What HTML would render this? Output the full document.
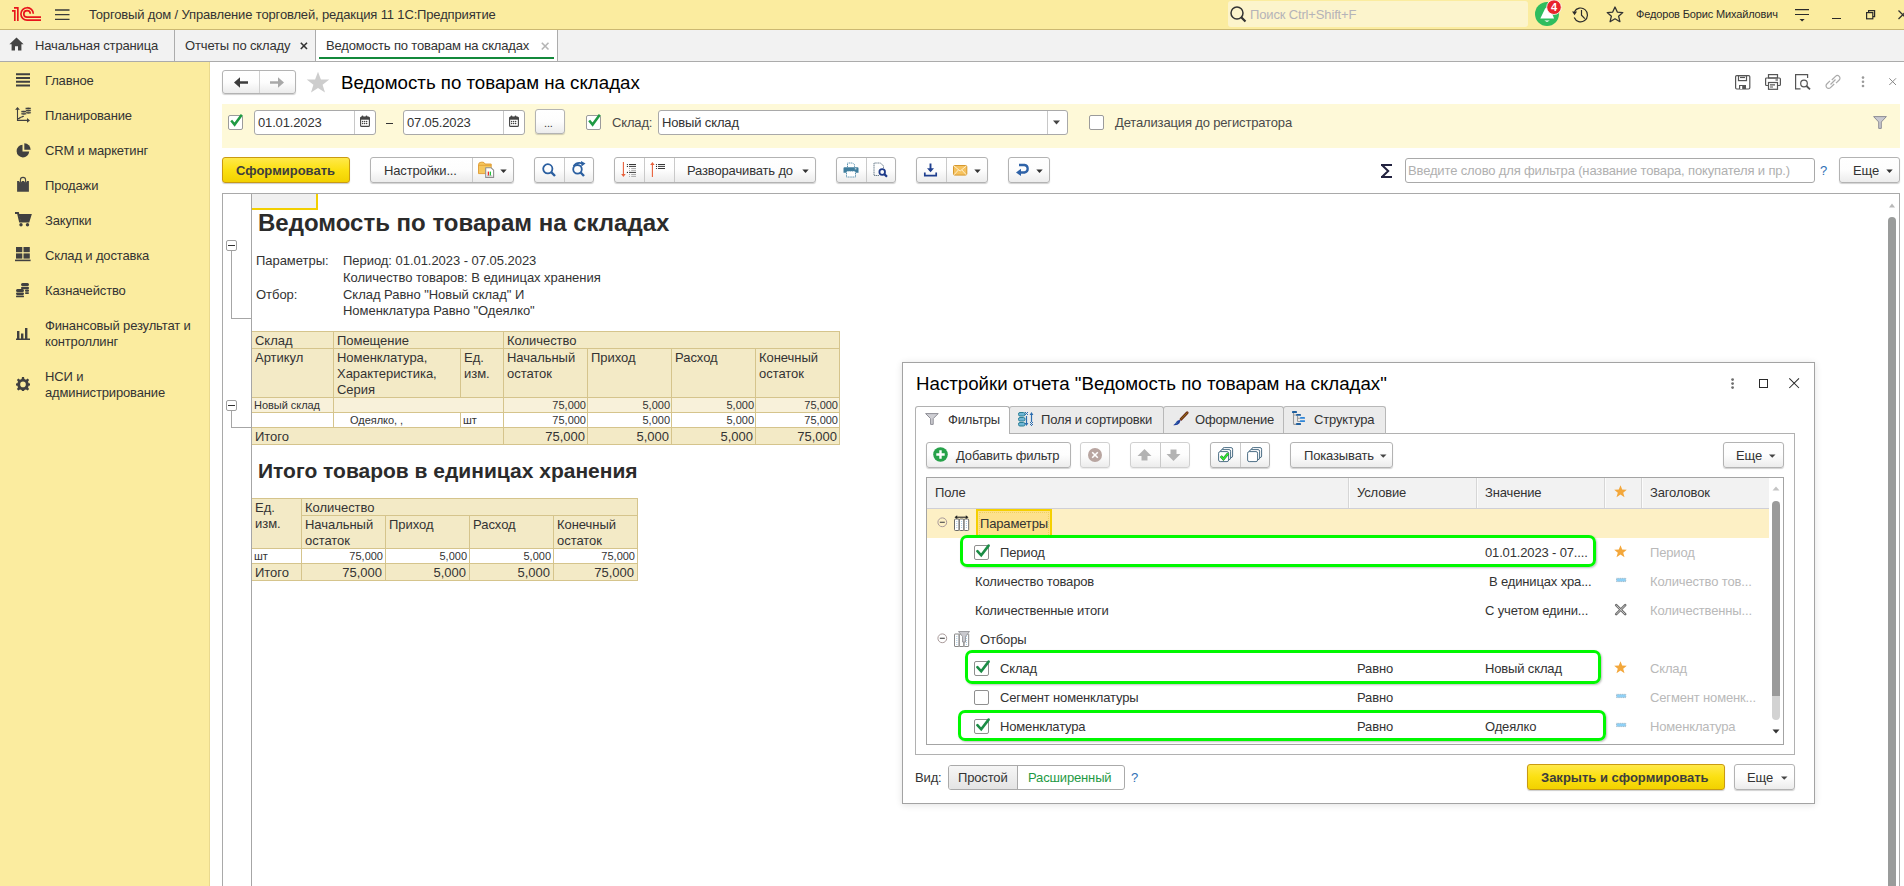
<!DOCTYPE html>
<html><head><meta charset="utf-8">
<style>
*{margin:0;padding:0;box-sizing:border-box}
html,body{width:1904px;height:886px;overflow:hidden;background:#fff;font-family:"Liberation Sans",sans-serif;font-size:13px;color:#333}
.a{position:absolute}
.t{position:absolute;white-space:nowrap;line-height:16px;letter-spacing:-0.15px}
svg{position:absolute;overflow:visible}
.btn{position:absolute;border:1px solid #b3b3b3;border-radius:3px;background:linear-gradient(#fff 0%,#fdfdfd 50%,#ececec 100%);box-shadow:0 1px 1px rgba(0,0,0,.18)}
.dv{position:absolute;top:0;bottom:0;width:1px;background:#c9c9c9}
.ybtn{position:absolute;border:1px solid #c99a12;border-radius:3px;background:linear-gradient(#ffe94a 0%,#fbe012 50%,#f2d100 100%);box-shadow:0 1px 1px rgba(0,0,0,.2);font-weight:bold;color:#333}
.inp{position:absolute;border:1px solid #a9a9a9;border-radius:3px;background:#fff}
.cb{position:absolute;width:15px;height:15px;border:1px solid #9b9b9b;border-radius:2px;background:#fff}
.hl{position:absolute;height:1px}
.vl{position:absolute;width:1px}
</style></head><body>

<!-- TOP BAR -->
<div class="a" style="left:0;top:0;width:1904px;height:29px;background:#fbec9f"></div>
<div class="a" style="left:0;top:29px;width:1904px;height:1px;background:#cbb872"></div>

<!-- TAB BAR -->
<div class="a" style="left:0;top:30px;width:1904px;height:31px;background:#f2f2f2"></div>
<div class="a" style="left:0;top:61px;width:1904px;height:1px;background:#ababab"></div>

<!-- TOPCONTENT -->
<!-- logo 1C -->
<svg style="left:0;top:0" width="45" height="26">
 <g fill="none" stroke="#e8141c" stroke-width="1.65" stroke-linejoin="miter">
  <path d="M12 10.9 H14.8 V21"/>
  <path d="M14 7.8 H17.85 V21"/>
  <path d="M33.3 13.8 A6.2 6.2 0 1 0 27.1 20.1 H41"/>
  <path d="M30.3 13.8 A3.25 3.25 0 1 0 27.1 17.1 H41"/>
 </g>
</svg>
<!-- hamburger -->
<svg style="left:55px;top:9px" width="15" height="12"><g stroke="#3a3a3a" stroke-width="1.3"><path d="M0 1H14.5M0 5.7H14.5M0 10.4H14.5"/></g></svg>
<div class="t" style="left:89px;top:7px;color:#333">Торговый дом / Управление торговлей, редакция 11 1С:Предприятие</div>
<!-- search -->
<div class="a" style="left:1228px;top:1px;width:300px;height:26px;background:#fcf4cc;border-radius:3px"></div>
<svg style="left:1230px;top:6px" width="17" height="17"><circle cx="7" cy="7" r="6" fill="none" stroke="#333" stroke-width="1.5"/><path d="M11.2 11.2 L15.5 15.5" stroke="#333" stroke-width="2.2"/></svg>
<div class="t" style="left:1250px;top:7px;color:#b5b3b8">Поиск Ctrl+Shift+F</div>
<!-- bell -->
<svg style="left:1530px;top:0" width="34" height="28">
 <circle cx="17" cy="13.9" r="12" fill="#2fbd5e"/>
 <path d="M10.3 18.6 L14.2 10.5 Q15.5 7 17.5 7 Q19.5 7 20.8 10.5 L24.1 18.6 Z" fill="#fff"/>
 <path d="M14.3 20.4 H19.8 L17 22 Z" fill="#fff"/>
 <circle cx="24" cy="7.2" r="7.3" fill="#e8232a" stroke="#fff" stroke-width="0.8"/>
 <text x="24" y="11" font-family="Liberation Sans" font-weight="bold" font-size="11" fill="#fff" text-anchor="middle">4</text>
</svg>
<!-- history -->
<svg style="left:1572px;top:6px" width="18" height="17"><g fill="none" stroke="#2a2a2a" stroke-width="1.2"><path d="M2.4 5.8 A6.9 6.9 0 1 1 2.2 11.6"/><path d="M9.5 4 V9.2 L12.8 12.6"/></g><path d="M0 5.5 L5 5.5 L2.6 9.2 Z" fill="#2a2a2a"/></svg>
<!-- star outline -->
<svg style="left:1606px;top:6px" width="18" height="17" viewBox="0 0 18 17"><path d="M9 1 L11.3 6.1 L16.8 6.6 L12.6 10.2 L13.9 15.7 L9 12.8 L4.1 15.7 L5.4 10.2 L1.2 6.6 L6.7 6.1 Z" fill="none" stroke="#333" stroke-width="1.3" stroke-linejoin="round"/></svg>
<div class="t" style="left:1636px;top:6px;font-size:11px;color:#2a2a2a">Федоров Борис Михайлович</div>
<!-- filter/menu icon -->
<svg style="left:1795px;top:8px" width="15" height="15"><g stroke="#2a2a2a" stroke-width="1.2"><path d="M0 1.6H14M0 6.5H14"/></g><path d="M4.5 11 H9.7 L7.1 13.6Z" fill="#2a2a2a"/></svg>
<!-- minimize -->
<div class="a" style="left:1832px;top:18px;width:9px;height:1.2px;background:#2a2a2a"></div>
<!-- restore -->
<svg style="left:1866px;top:10px" width="10" height="10"><rect x="0.6" y="2.6" width="6.2" height="6.2" fill="none" stroke="#2a2a2a" stroke-width="1.2"/><path d="M2.6 2.4 V0.6 H8.6 V6.6 H7" fill="none" stroke="#2a2a2a" stroke-width="1.2"/></svg>
<!-- close -->
<svg style="left:1898px;top:10px" width="10" height="10"><path d="M0.5 0.5 L9 9 M9 0.5 L0.5 9" stroke="#333" stroke-width="1.3"/></svg>

<!-- TABS -->
<svg style="left:9px;top:37px" width="15" height="14" viewBox="0 0 15 14"><path d="M7.5 0.5 L14.6 7.2 H12.4 V13.5 H9 V9.3 H6 V13.5 H2.6 V7.2 H0.4 Z" fill="#444"/></svg>
<div class="t" style="left:35px;top:38px;color:#333">Начальная страница</div>
<div class="a" style="left:174px;top:30px;width:1px;height:31px;background:#acacac"></div>
<div class="t" style="left:185px;top:38px;color:#333">Отчеты по складу</div>
<svg style="left:300px;top:42px" width="8" height="8"><path d="M0.8 0.8 L7 7 M7 0.8 L0.8 7" stroke="#333" stroke-width="1.6"/></svg>
<div class="a" style="left:315px;top:30px;width:1px;height:31px;background:#acacac"></div>
<div class="a" style="left:316px;top:30px;width:241px;height:31px;background:#fff"></div>
<div class="t" style="left:326px;top:38px;color:#333">Ведомость по товарам на складах</div>
<svg style="left:541px;top:42px" width="9" height="9"><path d="M0.8 0.8 L7.5 7.5 M7.5 0.8 L0.8 7.5" stroke="#b5b5b5" stroke-width="1.6"/></svg>
<div class="a" style="left:319px;top:57px;width:235px;height:2px;background:#13893b"></div>
<div class="a" style="left:557px;top:30px;width:1px;height:31px;background:#acacac"></div>

<!-- SIDEBAR -->
<div class="a" style="left:0;top:62px;width:210px;height:824px;background:#fbec9f"></div>

<div class="a" style="left:209px;top:62px;width:1px;height:824px;background:#e9d98f"></div>
<!-- Главное -->
<svg style="left:16px;top:73px" width="15" height="14"><g stroke="#404040" stroke-width="2"><path d="M0 1.2H14M0 5H14M0 8.8H14M0 12.6H14"/></g></svg>
<div class="t" style="left:45px;top:73px">Главное</div>
<!-- Планирование -->
<svg style="left:12px;top:104px" width="24" height="22" viewBox="0 0 24 22"><g fill="none" stroke="#404040" stroke-width="1.1"><path d="M5.5 4.5 V16.4 H16"/><path d="M5.8 14.6 H7 L7.6 13.8 H8.6 L9.2 13 H10.2 L10.8 12.4 H11.8"/></g><path d="M3.1 5.7 L5.5 2.9 L7.9 5.7Z M15 14.1 L18 16.4 L15 18.8Z" fill="#404040"/><g fill="#404040" stroke="#fbec9f" stroke-width="0.5"><ellipse cx="16.2" cy="8.7" rx="3" ry="1.2"/><ellipse cx="16.2" cy="6.6" rx="3" ry="1.2"/><ellipse cx="16.2" cy="4.5" rx="3" ry="1.2"/><ellipse cx="11.8" cy="9.8" rx="2.9" ry="1.2"/><ellipse cx="11.8" cy="7.6" rx="2.9" ry="1.2"/></g></svg>
<div class="t" style="left:45px;top:108px">Планирование</div>
<!-- CRM -->
<svg style="left:16px;top:143px" width="15" height="15" viewBox="0 0 15 15"><path d="M6.5 1.8 A6.3 6.3 0 1 0 13.2 8.5 H6.5 Z" fill="#404040"/><path d="M8.3 0.3 A6.3 6.3 0 0 1 14.7 6.7 H8.3 Z" fill="#404040"/></svg>
<div class="t" style="left:45px;top:143px">CRM и маркетинг</div>
<!-- Продажи -->
<svg style="left:12px;top:174px" width="24" height="22" viewBox="0 0 24 22"><path d="M5.1 7.1 H7 L8.4 9.3 L10 7.1 H12 L13.6 9.3 L15 7.1 H16.9 V17.7 H5.1 Z" fill="#454545"/><path d="M8.4 9 V6 A2.6 2.6 0 0 1 13.6 6 V9" fill="none" stroke="#454545" stroke-width="1.1"/></svg>
<div class="t" style="left:45px;top:178px">Продажи</div>
<!-- Закупки -->
<svg style="left:15px;top:212px" width="16" height="15" viewBox="0 0 16 15"><path d="M0 1 H3 L5 9.5 H13.5 L15.5 3 H4" fill="none" stroke="#404040" stroke-width="2"/><path d="M4.3 3 H15.5 L13.5 9.5 H5.5 Z" fill="#404040"/><circle cx="6" cy="12.8" r="1.7" fill="#404040"/><circle cx="12.5" cy="12.8" r="1.7" fill="#404040"/></svg>
<div class="t" style="left:45px;top:213px">Закупки</div>
<!-- Склад и доставка -->
<svg style="left:15px;top:247px" width="16" height="15" viewBox="0 0 16 15"><g fill="#404040"><rect x="1" y="0" width="6.3" height="5.2"/><rect x="8.5" y="0" width="6.3" height="5.2"/><rect x="1" y="6.4" width="6.3" height="5.2"/><rect x="8.5" y="6.4" width="6.3" height="5.2"/><rect x="0" y="12.6" width="15.6" height="1.6"/></g></svg>
<div class="t" style="left:45px;top:248px">Склад и доставка</div>
<!-- Казначейство -->
<svg style="left:12px;top:278px" width="24" height="22" viewBox="0 0 24 22"><g fill="#404040"><rect x="9" y="5" width="8" height="3" rx="1.5"/><rect x="9" y="8.7" width="8" height="2.5" rx="1.2"/><rect x="13" y="11.6" width="4" height="2.2" rx="1"/><rect x="13" y="14.2" width="4" height="1.8" rx="0.9"/><rect x="4" y="11" width="8" height="3" rx="1.5"/><rect x="4" y="14.6" width="8" height="2.3" rx="1.1"/><rect x="4" y="17.5" width="8" height="1.8" rx="0.9"/></g></svg>
<div class="t" style="left:45px;top:283px">Казначейство</div>
<!-- Финансовый -->
<svg style="left:16px;top:327px" width="14" height="13" viewBox="0 0 14 13"><g fill="#404040"><rect x="1" y="4" width="2.4" height="8"/><rect x="5" y="6.5" width="2.4" height="5.5"/><rect x="9" y="1" width="2.4" height="11"/><rect x="0" y="11.5" width="14" height="1.5"/></g></svg>
<div class="t" style="left:45px;top:318px;line-height:16px">Финансовый результат и<br>контроллинг</div>
<!-- НСИ -->
<svg style="left:16px;top:377px" width="14" height="14" viewBox="0 0 14 14"><path fill="#404040" fill-rule="evenodd" d="M6 0 H8 L8.4 2 L10 2.7 L11.7 1.5 L13.1 2.9 L12 4.6 L12.6 6.2 L14 6.5 V8.5 L12.6 8.8 L12 10.4 L13.1 12.1 L11.7 13.5 L10 12.4 L8.4 13 L8 14 H6 L5.6 13 L4 12.4 L2.3 13.5 L0.9 12.1 L2 10.4 L1.4 8.8 L0 8.5 V6.5 L1.4 6.2 L2 4.6 L0.9 2.9 L2.3 1.5 L4 2.7 L5.6 2 Z M7 4.6 A2.8 2.8 0 1 0 7 10.2 A2.8 2.8 0 1 0 7 4.6Z"/></svg>
<div class="t" style="left:45px;top:369px;line-height:16px">НСИ и<br>администрирование</div>

<!-- CONTENT -->
<!-- nav buttons -->
<div class="btn" style="left:222px;top:70px;width:74px;height:24px"><div class="dv" style="left:36px;background:#d0d0d0"></div></div>
<svg style="left:230px;top:75px" width="60" height="15"><path d="M9.5 7.5 H18" stroke="#3c3c3c" stroke-width="2.5"/><path d="M4 7.5 L10 2.3 V12.7 Z" fill="#3c3c3c"/><path d="M40 7.5 H48.5" stroke="#a8a8a8" stroke-width="2.5"/><path d="M54 7.5 L48 2.3 V12.7 Z" fill="#a8a8a8"/></svg>
<!-- star -->
<svg style="left:306px;top:71px" width="24" height="22" viewBox="0 0 24 22"><path d="M12 0.8 L14.9 8.4 L23.3 8.6 L16.6 13.7 L19 21.6 L12 17 L5 21.6 L7.4 13.7 L0.7 8.6 L9.1 8.4 Z" fill="#cdcdcd"/></svg>
<div class="t" style="left:341px;top:72px;font-size:18.7px;line-height:22px;color:#000;letter-spacing:0">Ведомость по товарам на складах</div>
<!-- right icons -->
<svg style="left:1735px;top:75px" width="16" height="15" viewBox="0 0 16 15"><g fill="none" stroke="#555" stroke-width="1.2"><rect x="0.6" y="0.6" width="14.2" height="13.4" rx="1.2"/><rect x="3.5" y="0.6" width="8" height="5"/><path d="M5 2.5 H10"/></g><rect x="4" y="10" width="7" height="4" fill="#555"/><rect x="5.2" y="11" width="2" height="3" fill="#fff"/></svg>
<svg style="left:1765px;top:74px" width="17" height="16" viewBox="0 0 17 16"><g fill="none" stroke="#555" stroke-width="1.2"><rect x="3.5" y="0.6" width="9" height="3.4"/><path d="M3.5 11.5 H1.6 A1 1 0 0 1 0.6 10.5 V5 A1 1 0 0 1 1.6 4 H14.4 A1 1 0 0 1 15.4 5 V10.5 A1 1 0 0 1 14.4 11.5 H12.5"/><rect x="3.5" y="8.5" width="9" height="6.8"/><path d="M5 10.8 H10 M5 13 H8"/><path d="M10.5 6 H13"/></g></svg>
<svg style="left:1795px;top:74px" width="17" height="16" viewBox="0 0 17 16"><g fill="none" stroke="#555" stroke-width="1.2"><path d="M5.5 14.8 H0.6 V0.6 H12.6 V4"/><circle cx="9" cy="9.5" r="3.3"/></g><path d="M11.5 12 L15 15.4" stroke="#555" stroke-width="1.8"/></svg>
<svg style="left:1825px;top:74px" width="16" height="16" viewBox="0 0 16 16"><g fill="none" stroke="#aaa" stroke-width="1.2"><path d="M6.8 6 L10.5 2.3 A2.6 2.6 0 0 1 14.2 6 L11 9.2"/><path d="M9.2 10 L5.5 13.7 A2.6 2.6 0 0 1 1.8 10 L5 6.8"/><path d="M5.5 10.5 L10.5 5.5"/></g></svg>
<svg style="left:1861px;top:76px" width="4" height="12"><circle cx="2" cy="1.6" r="1.3" fill="#9a9a9a"/><circle cx="2" cy="5.8" r="1.3" fill="#9a9a9a"/><circle cx="2" cy="10" r="1.3" fill="#9a9a9a"/></svg>
<svg style="left:1889px;top:78px" width="8" height="8"><path d="M0.3 0.3 L7 7 M7 0.3 L0.3 7" stroke="#888" stroke-width="1"/></svg>

<!-- FILTER PANEL -->
<div class="a" style="left:222px;top:104px;width:1678px;height:44px;background:#fef9d8"></div>
<div class="cb" style="left:228px;top:115px"></div>
<svg style="left:229px;top:113px" width="15" height="15"><path d="M2.2 7.5 L5.6 11.6 L12.8 1.8" fill="none" stroke="#1f9a43" stroke-width="2.5"/></svg>
<div class="inp" style="left:254px;top:110px;width:122px;height:25px"><div class="dv" style="left:99px;background:#c8c8c8"></div></div>
<div class="t" style="left:258px;top:115px;color:#333">01.01.2023</div>
<svg style="left:360px;top:115px" width="10" height="12" viewBox="0 0 10 12"><rect x="0.6" y="2.1" width="8.8" height="9.3" rx="1" fill="#fff" stroke="#444" stroke-width="1.1"/><rect x="0.6" y="2.1" width="8.8" height="2.6" fill="#444"/><circle cx="2.5" cy="1.4" r="0.9" fill="#444"/><circle cx="6.5" cy="1.4" r="0.9" fill="#444"/><g fill="#444"><circle cx="2.6" cy="6.6" r="0.75"/><circle cx="4.6" cy="6.6" r="0.75"/><circle cx="6.6" cy="6.6" r="0.75"/><circle cx="2.6" cy="8.5" r="0.75"/><circle cx="4.6" cy="8.5" r="0.75"/><circle cx="6.6" cy="8.5" r="0.75"/></g></svg>
<div class="a" style="left:386px;top:123px;width:7px;height:1px;background:#333"></div>
<div class="inp" style="left:403px;top:110px;width:122px;height:25px"><div class="dv" style="left:99px;background:#c8c8c8"></div></div>
<div class="t" style="left:407px;top:115px;color:#333">07.05.2023</div>
<svg style="left:509px;top:115px" width="10" height="12" viewBox="0 0 10 12"><rect x="0.6" y="2.1" width="8.8" height="9.3" rx="1" fill="#fff" stroke="#444" stroke-width="1.1"/><rect x="0.6" y="2.1" width="8.8" height="2.6" fill="#444"/><circle cx="2.5" cy="1.4" r="0.9" fill="#444"/><circle cx="6.5" cy="1.4" r="0.9" fill="#444"/><g fill="#444"><circle cx="2.6" cy="6.6" r="0.75"/><circle cx="4.6" cy="6.6" r="0.75"/><circle cx="6.6" cy="6.6" r="0.75"/><circle cx="2.6" cy="8.5" r="0.75"/><circle cx="4.6" cy="8.5" r="0.75"/><circle cx="6.6" cy="8.5" r="0.75"/></g></svg>
<div class="btn" style="left:535px;top:109px;width:30px;height:25px"></div>
<div class="t" style="left:544px;top:115px;font-size:11px">...</div>
<div class="cb" style="left:586px;top:115px"></div>
<svg style="left:587px;top:113px" width="15" height="15"><path d="M2.2 7.5 L5.6 11.6 L12.8 1.8" fill="none" stroke="#1f9a43" stroke-width="2.5"/></svg>
<div class="t" style="left:612px;top:115px;color:#4a4a4a">Склад:</div>
<div class="inp" style="left:658px;top:110px;width:410px;height:25px"><div class="dv" style="left:388px;background:#c8c8c8"></div></div>
<div class="t" style="left:662px;top:115px;color:#333">Новый склад</div>
<svg style="left:1053px;top:120px" width="8" height="5"><path d="M0 0.5 H7 L3.5 4.5Z" fill="#444"/></svg>
<div class="cb" style="left:1089px;top:115px"></div>
<div class="t" style="left:1115px;top:115px;color:#4a4a4a">Детализация до регистратора</div>
<svg style="left:1873px;top:116px" width="14" height="13" viewBox="0 0 14 13"><path d="M0.6 0.6 H13.4 L8.3 6 V12.4 H5.7 V6 Z" fill="#c9c9d0" stroke="#8e8e96" stroke-width="1"/></svg>

<!-- TOOLBAR -->
<div class="ybtn" style="left:222px;top:157px;width:128px;height:26px"></div>
<div class="t" style="left:236px;top:163px;font-weight:bold;color:#3d3d3d;letter-spacing:0">Сформировать</div>

<div class="btn" style="left:370px;top:157px;width:144px;height:26px"><div class="dv" style="left:101px"></div></div>
<div class="t" style="left:384px;top:163px">Настройки...</div>
<svg style="left:477px;top:161px" width="19" height="18" viewBox="0 0 19 18"><path d="M1.5 3.8 Q1.5 1.3 4 1.2 H6 Q7.2 1.3 8 3 H14.2 V12.6 H1.5 Z" fill="#f5c75e" stroke="#e09a30" stroke-width="0.9"/><path d="M1.5 4.3 H14.2" stroke="#e09a30" stroke-width="0.8"/><path d="M8.7 6.8 H14.2 L16.6 9.2 V16.4 H8.7 Z" fill="#fff" stroke="#8f8f8f" stroke-width="1.1" stroke-linejoin="round"/><rect x="10.7" y="10.6" width="1.3" height="4" fill="#ee2a2a"/><rect x="12.7" y="10.6" width="1.3" height="4" fill="#22c23a"/><path d="M10 14.8 H15.3" stroke="#9a9a9a" stroke-width="0.6"/></svg>
<svg style="left:500px;top:169px" width="8" height="5"><path d="M0.3 0.6 H6.7 L3.5 4Z" fill="#333"/></svg>

<div class="btn" style="left:534px;top:157px;width:60px;height:26px"><div class="dv" style="left:29px"></div></div>
<svg style="left:542px;top:163px" width="14" height="14"><circle cx="5.8" cy="5.8" r="4.6" fill="none" stroke="#2b5fa0" stroke-width="1.8"/><path d="M9.2 9.2 L13 13" stroke="#2b5fa0" stroke-width="2.4"/></svg>
<svg style="left:571px;top:161px" width="16" height="16"><circle cx="6.5" cy="8.3" r="4.3" fill="none" stroke="#2b5fa0" stroke-width="1.8"/><path d="M9.6 11.5 L13 15" stroke="#2b5fa0" stroke-width="2.4"/><path d="M2.5 5 Q6 0.5 11.5 2.5" fill="none" stroke="#2b5fa0" stroke-width="1.5"/><path d="M10 0 L14.5 2.5 L10.5 5.5Z" fill="#2b5fa0"/></svg>

<div class="btn" style="left:614px;top:157px;width:202px;height:26px"><div class="dv" style="left:29px"></div><div class="dv" style="left:59px"></div></div>
<svg style="left:612px;top:155px" width="60" height="25"><path d="M11.4 7 V20.5" stroke="#e8603a" stroke-width="1.1"/><path d="M9.2 19 H13.6 L11.4 22Z" fill="#e8603a"/><g fill="#222"><circle cx="15.4" cy="9.5" r="0.6"/><circle cx="15.4" cy="11.4" r="0.6"/><circle cx="15.4" cy="17.4" r="0.6"/></g><g stroke="#222" stroke-width="0.9"><path d="M17 9.5 H24 M17 11.4 H24 M17 17.4 H24"/></g><g fill="#999"><circle cx="17.5" cy="13.5" r="0.5"/><circle cx="17.5" cy="15.4" r="0.5"/><circle cx="17.5" cy="19.5" r="0.5"/><circle cx="17.5" cy="21.4" r="0.5"/></g><g stroke="#999" stroke-width="0.8"><path d="M19.2 13.5 H24 M19.2 15.4 H24 M19.2 19.5 H24 M19.2 21.4 H24"/></g><path d="M40.4 9 V22" stroke="#e8603a" stroke-width="1.1"/><path d="M38.2 10 H42.6 L40.4 7Z" fill="#e8603a"/><g fill="#222"><circle cx="44.5" cy="9.5" r="0.6"/><circle cx="44.5" cy="11.4" r="0.6"/><circle cx="44.5" cy="13.5" r="0.6"/></g><g stroke="#222" stroke-width="0.9"><path d="M46 9.5 H53 M46 11.4 H53 M46 13.5 H53"/></g></svg>
<div class="t" style="left:687px;top:163px">Разворачивать до</div>
<svg style="left:802px;top:169px" width="8" height="5"><path d="M0.3 0.6 H6.7 L3.5 4Z" fill="#333"/></svg>

<div class="btn" style="left:836px;top:157px;width:60px;height:26px"><div class="dv" style="left:29px"></div></div>
<svg style="left:843px;top:162px" width="16" height="16" viewBox="0 0 16 16"><path d="M4.5 5 V1 H9.8 L11.5 2.7 V5" fill="#fff" stroke="#4a86a6" stroke-width="0.9" stroke-dasharray="1.2 0.6"/><path d="M1.5 5.2 H14.5 Q15.5 5.2 15.5 6.2 V10.8 H12.5 V9 H3.5 V10.8 H0.5 V6.2 Q0.5 5.2 1.5 5.2Z" fill="#3f7d9d"/><path d="M3.5 9 H12.5 V15 H3.5Z" fill="#fff" stroke="#4a86a6" stroke-width="0.9" stroke-dasharray="1.2 0.6"/><rect x="11.8" y="6.4" width="1.6" height="0.9" fill="#fff"/></svg>
<svg style="left:873px;top:162px" width="16" height="17" viewBox="0 0 16 17"><path d="M6 13.5 H1 V1 H7.5 L10.5 4 V6.5" fill="none" stroke="#5b6f80" stroke-width="0.9" stroke-dasharray="1.3 0.5"/><circle cx="9.2" cy="10" r="2.8" fill="none" stroke="#1e3a8a" stroke-width="1.8"/><path d="M11.3 12.1 L14 14.8" stroke="#1e3a8a" stroke-width="2.2"/></svg>

<div class="btn" style="left:916px;top:157px;width:72px;height:26px"><div class="dv" style="left:29px"></div></div>
<svg style="left:923px;top:163px" width="16" height="14" viewBox="0 0 16 14"><path d="M7.5 0.5 V8" stroke="#1f3f8f" stroke-width="1.9"/><path d="M4 5.2 L7.5 9.3 L11 5.2Z" fill="#1f3f8f"/><path d="M1.8 9.5 V12.6 H13.2 V9.5" fill="none" stroke="#1f3f8f" stroke-width="1.7"/></svg>
<svg style="left:953px;top:165px" width="15" height="11" viewBox="0 0 15 11"><rect x="0.5" y="0.5" width="13.3" height="9.6" rx="1.2" fill="#f6c25e" stroke="#d5982e" stroke-width="1"/><path d="M1 1 L7.15 6 L13.3 1 M1 9.8 L5.4 5 M13.3 9.8 L8.9 5" fill="none" stroke="#fff3d6" stroke-width="0.9"/></svg>
<svg style="left:974px;top:169px" width="8" height="5"><path d="M0.3 0.6 H6.7 L3.5 4Z" fill="#333"/></svg>

<div class="btn" style="left:1008px;top:157px;width:42px;height:26px"></div>
<svg style="left:1016px;top:163px" width="14" height="13" viewBox="0 0 14 13"><path d="M5 9.5 H8.5 A3.8 3.8 0 0 0 8.5 2 H3" fill="none" stroke="#2f63a8" stroke-width="2.3"/><path d="M0 9.5 L5 5.8 V13 Z" fill="#2f63a8"/></svg>
<svg style="left:1036px;top:169px" width="8" height="5"><path d="M0.3 0.6 H6.7 L3.5 4Z" fill="#333"/></svg>

<svg style="left:1381px;top:164px" width="11" height="14"><g fill="#22223f"><rect x="0" y="0" width="11" height="2"/><rect x="0" y="12" width="11" height="2"/></g><path d="M1.2 1.2 L7.2 7 L1.2 12.8" fill="none" stroke="#22223f" stroke-width="2"/></svg>
<div class="inp" style="left:1405px;top:158px;width:410px;height:25px"></div>
<div class="t" style="left:1408px;top:163px;color:#b0b0b0">Введите слово для фильтра (название товара, покупателя и пр.)</div>
<div class="t" style="left:1820px;top:163px;color:#2f6fb5">?</div>
<div class="btn" style="left:1839px;top:157px;width:61px;height:26px"></div>
<div class="t" style="left:1853px;top:163px">Еще</div>
<svg style="left:1886px;top:169px" width="8" height="5"><path d="M0.3 0.6 H6.7 L3.5 4Z" fill="#333"/></svg>

<!-- REPORT -->
<div class="a" style="left:222px;top:193px;width:1678px;height:1px;background:#a9a9a9"></div>
<div class="a" style="left:222px;top:193px;width:1px;height:693px;background:#a9a9a9"></div>
<div class="a" style="left:1899px;top:193px;width:1px;height:693px;background:#a9a9a9"></div>
<div class="a" style="left:251px;top:194px;width:1px;height:692px;background:#a6a6a6"></div>
<div class="a" style="left:252px;top:194px;width:64px;height:14px;background:#f0f0f0"></div>
<div class="a" style="left:316px;top:194px;width:2px;height:16px;background:#f2cf00"></div>
<div class="a" style="left:252px;top:208px;width:66px;height:2px;background:#f2cf00"></div>
<div class="t" style="left:258px;top:208.68px;font-size:24px;line-height:28px;letter-spacing:-0.04px;font-weight:bold;color:#2b2b2b;letter-spacing:0">Ведомость по товарам на складах</div>
<div class="a" style="left:226px;top:240px;width:11px;height:11px;border:1px solid #a0a0a0;border-radius:2px;background:#fff"></div>
<div class="a" style="left:228px;top:245px;width:7px;height:1px;background:#333"></div>
<div class="a" style="left:231px;top:251px;width:1px;height:67px;background:#a6a6a6"></div>
<div class="a" style="left:231px;top:318px;width:20px;height:1px;background:#a6a6a6"></div>
<div class="t" style="left:256px;top:252.50px;font-size:13px;line-height:16px;letter-spacing:-0.04px;color:#333">Параметры:</div>
<div class="t" style="left:343px;top:252.50px;font-size:13px;line-height:16px;letter-spacing:-0.04px;color:#333">Период: 01.01.2023 - 07.05.2023</div>
<div class="t" style="left:343px;top:269.50px;font-size:13px;line-height:16px;letter-spacing:-0.04px;color:#333">Количество товаров: В единицах хранения</div>
<div class="t" style="left:256px;top:286.50px;font-size:13px;line-height:16px;letter-spacing:-0.04px;color:#333">Отбор:</div>
<div class="t" style="left:343px;top:286.50px;font-size:13px;line-height:16px;letter-spacing:-0.04px;color:#333">Склад Равно "Новый склад" И</div>
<div class="t" style="left:343px;top:302.50px;font-size:13px;line-height:16px;letter-spacing:-0.04px;color:#333">Номенклатура Равно "Одеялко"</div>
<div class="a" style="left:252px;top:332px;width:587px;height:16px;background:#f3eac6"></div>
<div class="a" style="left:252px;top:349px;width:587px;height:48px;background:#f3eac6"></div>
<div class="a" style="left:252px;top:398px;width:587px;height:14px;background:#f8f1da"></div>
<div class="a" style="left:252px;top:413px;width:587px;height:14px;background:#ffffff"></div>
<div class="a" style="left:252px;top:428px;width:587px;height:16px;background:#f3eac6"></div>
<div class="a" style="left:252px;top:331px;width:588px;height:1px;background:#d5c48c"></div>
<div class="a" style="left:252px;top:348px;width:588px;height:1px;background:#d5c48c"></div>
<div class="a" style="left:252px;top:397px;width:588px;height:1px;background:#d5c48c"></div>
<div class="a" style="left:252px;top:412px;width:588px;height:1px;background:#d5c48c"></div>
<div class="a" style="left:252px;top:427px;width:588px;height:1px;background:#d5c48c"></div>
<div class="a" style="left:252px;top:444px;width:588px;height:1px;background:#d5c48c"></div>
<div class="a" style="left:839px;top:331px;width:1px;height:114px;background:#d5c48c"></div>
<div class="a" style="left:333px;top:331px;width:1px;height:18px;background:#d5c48c"></div>
<div class="a" style="left:503px;top:331px;width:1px;height:18px;background:#d5c48c"></div>
<div class="a" style="left:333px;top:348px;width:1px;height:50px;background:#d5c48c"></div>
<div class="a" style="left:460px;top:348px;width:1px;height:50px;background:#d5c48c"></div>
<div class="a" style="left:503px;top:348px;width:1px;height:50px;background:#d5c48c"></div>
<div class="a" style="left:587px;top:348px;width:1px;height:50px;background:#d5c48c"></div>
<div class="a" style="left:671px;top:348px;width:1px;height:50px;background:#d5c48c"></div>
<div class="a" style="left:755px;top:348px;width:1px;height:50px;background:#d5c48c"></div>
<div class="a" style="left:333px;top:397px;width:1px;height:16px;background:#d5c48c"></div>
<div class="a" style="left:503px;top:397px;width:1px;height:16px;background:#d5c48c"></div>
<div class="a" style="left:587px;top:397px;width:1px;height:16px;background:#d5c48c"></div>
<div class="a" style="left:671px;top:397px;width:1px;height:16px;background:#d5c48c"></div>
<div class="a" style="left:755px;top:397px;width:1px;height:16px;background:#d5c48c"></div>
<div class="a" style="left:333px;top:412px;width:1px;height:16px;background:#d5c48c"></div>
<div class="a" style="left:460px;top:412px;width:1px;height:16px;background:#d5c48c"></div>
<div class="a" style="left:503px;top:412px;width:1px;height:16px;background:#d5c48c"></div>
<div class="a" style="left:587px;top:412px;width:1px;height:16px;background:#d5c48c"></div>
<div class="a" style="left:671px;top:412px;width:1px;height:16px;background:#d5c48c"></div>
<div class="a" style="left:755px;top:412px;width:1px;height:16px;background:#d5c48c"></div>
<div class="a" style="left:503px;top:427px;width:1px;height:18px;background:#d5c48c"></div>
<div class="a" style="left:587px;top:427px;width:1px;height:18px;background:#d5c48c"></div>
<div class="a" style="left:671px;top:427px;width:1px;height:18px;background:#d5c48c"></div>
<div class="a" style="left:755px;top:427px;width:1px;height:18px;background:#d5c48c"></div>
<div class="t" style="left:255px;top:332.50px;font-size:13px;line-height:16px;letter-spacing:-0.04px;">Склад</div>
<div class="t" style="left:337px;top:332.50px;font-size:13px;line-height:16px;letter-spacing:-0.04px;">Помещение</div>
<div class="t" style="left:507px;top:332.50px;font-size:13px;line-height:16px;letter-spacing:-0.04px;">Количество</div>
<div class="t" style="left:255px;top:349.50px;font-size:13px;line-height:16px;letter-spacing:-0.04px;">Артикул</div>
<div class="t" style="left:337px;top:349.5px;line-height:16px;letter-spacing:-0.04px">Номенклатура,<br>Характеристика,<br>Серия</div>
<div class="t" style="left:464px;top:349.5px;line-height:16px;letter-spacing:-0.04px">Ед.<br>изм.</div>
<div class="t" style="left:507px;top:349.5px;line-height:16px;letter-spacing:-0.04px">Начальный<br>остаток</div>
<div class="t" style="left:591px;top:349.50px;font-size:13px;line-height:16px;letter-spacing:-0.04px;">Приход</div>
<div class="t" style="left:675px;top:349.50px;font-size:13px;line-height:16px;letter-spacing:-0.04px;">Расход</div>
<div class="t" style="left:759px;top:349.5px;line-height:16px;letter-spacing:-0.04px">Конечный<br>остаток</div>
<div class="t" style="left:254px;top:398.69px;font-size:11px;line-height:13px;letter-spacing:-0.04px;">Новый склад</div>
<div class="t" style="left:286px;width:300px;text-align:right;top:398.69px;font-size:11px;line-height:13px;letter-spacing:0;">75,000</div>
<div class="t" style="left:370px;width:300px;text-align:right;top:398.69px;font-size:11px;line-height:13px;letter-spacing:0;">5,000</div>
<div class="t" style="left:454px;width:300px;text-align:right;top:398.69px;font-size:11px;line-height:13px;letter-spacing:0;">5,000</div>
<div class="t" style="left:538px;width:300px;text-align:right;top:398.69px;font-size:11px;line-height:13px;letter-spacing:0;">75,000</div>
<div class="t" style="left:350px;top:414.19px;font-size:11px;line-height:13px;letter-spacing:-0.04px;">Одеялко, ,</div>
<div class="t" style="left:463px;top:414.19px;font-size:11px;line-height:13px;letter-spacing:-0.04px;">шт</div>
<div class="t" style="left:286px;width:300px;text-align:right;top:414.19px;font-size:11px;line-height:13px;letter-spacing:0;">75,000</div>
<div class="t" style="left:370px;width:300px;text-align:right;top:414.19px;font-size:11px;line-height:13px;letter-spacing:0;">5,000</div>
<div class="t" style="left:454px;width:300px;text-align:right;top:414.19px;font-size:11px;line-height:13px;letter-spacing:0;">5,000</div>
<div class="t" style="left:538px;width:300px;text-align:right;top:414.19px;font-size:11px;line-height:13px;letter-spacing:0;">75,000</div>
<div class="t" style="left:255px;top:428.50px;font-size:13px;line-height:16px;letter-spacing:-0.04px;">Итого</div>
<div class="t" style="left:285px;width:300px;text-align:right;top:428.50px;font-size:13px;line-height:16px;letter-spacing:0;">75,000</div>
<div class="t" style="left:369px;width:300px;text-align:right;top:428.50px;font-size:13px;line-height:16px;letter-spacing:0;">5,000</div>
<div class="t" style="left:453px;width:300px;text-align:right;top:428.50px;font-size:13px;line-height:16px;letter-spacing:0;">5,000</div>
<div class="t" style="left:537px;width:300px;text-align:right;top:428.50px;font-size:13px;line-height:16px;letter-spacing:0;">75,000</div>
<div class="a" style="left:226px;top:400px;width:11px;height:11px;border:1px solid #a0a0a0;border-radius:2px;background:#fff"></div>
<div class="a" style="left:228px;top:405px;width:7px;height:1px;background:#333"></div>
<div class="a" style="left:231px;top:411px;width:1px;height:17px;background:#a6a6a6"></div>
<div class="a" style="left:231px;top:427px;width:20px;height:1px;background:#a6a6a6"></div>
<div class="t" style="left:258px;top:458.72px;font-size:21px;line-height:24px;letter-spacing:-0.04px;font-weight:bold;color:#2b2b2b;letter-spacing:0">Итого товаров в единицах хранения</div>
<div class="a" style="left:252px;top:499px;width:385px;height:16px;background:#f3eac6"></div>
<div class="a" style="left:252px;top:516px;width:385px;height:32px;background:#f3eac6"></div>
<div class="a" style="left:252px;top:499px;width:49px;height:49px;background:#f3eac6"></div>
<div class="a" style="left:252px;top:549px;width:385px;height:14px;background:#fff"></div>
<div class="a" style="left:252px;top:564px;width:385px;height:16px;background:#f3eac6"></div>
<div class="a" style="left:252px;top:498px;width:386px;height:1px;background:#d5c48c"></div>
<div class="a" style="left:252px;top:548px;width:386px;height:1px;background:#d5c48c"></div>
<div class="a" style="left:252px;top:563px;width:386px;height:1px;background:#d5c48c"></div>
<div class="a" style="left:252px;top:580px;width:386px;height:1px;background:#d5c48c"></div>
<div class="a" style="left:301px;top:515px;width:337px;height:1px;background:#d5c48c"></div>
<div class="a" style="left:637px;top:498px;width:1px;height:83px;background:#d5c48c"></div>
<div class="a" style="left:301px;top:498px;width:1px;height:83px;background:#d5c48c"></div>
<div class="a" style="left:385px;top:515px;width:1px;height:66px;background:#d5c48c"></div>
<div class="a" style="left:469px;top:515px;width:1px;height:66px;background:#d5c48c"></div>
<div class="a" style="left:553px;top:515px;width:1px;height:66px;background:#d5c48c"></div>
<div class="t" style="left:255px;top:499.50px;font-size:13px;line-height:16px;letter-spacing:-0.04px;">Ед.</div>
<div class="t" style="left:255px;top:515.50px;font-size:13px;line-height:16px;letter-spacing:-0.04px;">изм.</div>
<div class="t" style="left:305px;top:499.50px;font-size:13px;line-height:16px;letter-spacing:-0.04px;">Количество</div>
<div class="t" style="left:305px;top:516.5px;line-height:16px;letter-spacing:-0.04px">Начальный<br>остаток</div>
<div class="t" style="left:389px;top:517.00px;font-size:13px;line-height:16px;letter-spacing:-0.04px;">Приход</div>
<div class="t" style="left:473px;top:517.00px;font-size:13px;line-height:16px;letter-spacing:-0.04px;">Расход</div>
<div class="t" style="left:557px;top:516.5px;line-height:16px;letter-spacing:-0.04px">Конечный<br>остаток</div>
<div class="t" style="left:254px;top:550.19px;font-size:11px;line-height:13px;letter-spacing:-0.04px;">шт</div>
<div class="t" style="left:83px;width:300px;text-align:right;top:550.19px;font-size:11px;line-height:13px;letter-spacing:0;">75,000</div>
<div class="t" style="left:167px;width:300px;text-align:right;top:550.19px;font-size:11px;line-height:13px;letter-spacing:0;">5,000</div>
<div class="t" style="left:251px;width:300px;text-align:right;top:550.19px;font-size:11px;line-height:13px;letter-spacing:0;">5,000</div>
<div class="t" style="left:335px;width:300px;text-align:right;top:550.19px;font-size:11px;line-height:13px;letter-spacing:0;">75,000</div>
<div class="t" style="left:255px;top:564.50px;font-size:13px;line-height:16px;letter-spacing:-0.04px;">Итого</div>
<div class="t" style="left:82px;width:300px;text-align:right;top:564.50px;font-size:13px;line-height:16px;letter-spacing:0;">75,000</div>
<div class="t" style="left:166px;width:300px;text-align:right;top:564.50px;font-size:13px;line-height:16px;letter-spacing:0;">5,000</div>
<div class="t" style="left:250px;width:300px;text-align:right;top:564.50px;font-size:13px;line-height:16px;letter-spacing:0;">5,000</div>
<div class="t" style="left:334px;width:300px;text-align:right;top:564.50px;font-size:13px;line-height:16px;letter-spacing:0;">75,000</div>
<svg style="left:1889px;top:203px" width="7" height="5"><path d="M0 4.5 H6 L3 0.5Z" fill="#b9b9b9"/></svg>
<div class="a" style="left:1888px;top:217px;width:8px;height:700px;background:#9a9c9b;border-radius:4px"></div>
<!-- DIALOG -->
<div class="a" style="left:902px;top:362px;width:913px;height:442px;background:#fff;border:1px solid #a3a3a3;box-shadow:0 1px 7px rgba(0,0,0,.12)"></div>
<div class="t" style="left:916px;top:372.02px;font-size:18.7px;line-height:23px;color:#000;letter-spacing:0">Настройки отчета "Ведомость по товарам на складах"</div>
<svg style="left:1731px;top:378px" width="4" height="12"><circle cx="1.6" cy="1.6" r="1.4" fill="#6e6e6e"/><circle cx="1.6" cy="5.6" r="1.4" fill="#6e6e6e"/><circle cx="1.6" cy="9.6" r="1.4" fill="#6e6e6e"/></svg>
<div class="a" style="left:1759px;top:379px;width:9px;height:9px;background:transparent;border:1.2px solid #2a2a2a"></div>
<svg style="left:1789px;top:378px" width="11" height="11"><path d="M0.3 0.3 L10 10 M10 0.3 L0.3 10" stroke="#2a2a2a" stroke-width="1.05"/></svg>
<div class="a" style="left:915px;top:433px;width:880px;height:322px;background:#fff;border:1px solid #b1b1b1"></div>
<div class="a" style="left:1009px;top:406px;width:155px;height:28px;background:#ebebeb;border:1px solid #b8b8b8;border-bottom:none;border-radius:3px 3px 0 0"></div>
<div class="a" style="left:1163px;top:406px;width:121px;height:28px;background:#ebebeb;border:1px solid #b8b8b8;border-bottom:none;border-radius:3px 3px 0 0"></div>
<div class="a" style="left:1283px;top:406px;width:103px;height:28px;background:#ebebeb;border:1px solid #b8b8b8;border-bottom:none;border-radius:3px 3px 0 0"></div>
<div class="a" style="left:1009px;top:433px;width:376px;height:1px;background:#b1b1b1;"></div>
<div class="a" style="left:915px;top:406px;width:95px;height:28px;background:#fff;border:1px solid #b1b1b1;border-bottom:none;border-radius:3px 3px 0 0"></div>
<svg style="left:925px;top:413px" width="14" height="12"><path d="M0.6 0.6 H13.2 L8.2 5.6 V11.4 H5.6 V5.6 Z" fill="#cfcfd4" stroke="#8e8e96" stroke-width="1"/></svg>
<div class="t" style="left:948px;top:411.50px;font-size:13px;line-height:16px;color:#333">Фильтры</div>
<svg style="left:1017px;top:411px" width="19" height="17"><g fill="#6fb6d6" stroke="#2b7f95" stroke-width="1"><rect x="1.5" y="1.5" width="6.5" height="3.5" rx="1.5"/><rect x="1.5" y="6.5" width="6.5" height="3.5" rx="1.5"/><rect x="1.5" y="11.5" width="6.5" height="3.5" rx="1.5"/></g><path d="M9.5 5 V13" stroke="#2a6db0" stroke-width="1.2"/><path d="M7.6 12 L9.5 15 L11.4 12Z" fill="#2a6db0"/><g fill="#2a6db0"><rect x="8" y="1" width="1" height="1"/><rect x="10" y="1" width="1" height="1"/><rect x="9" y="2" width="1" height="1"/><rect x="8" y="3" width="1" height="1"/><rect x="10" y="3" width="1" height="1"/></g><path d="M14.5 3 V11" stroke="#2a6db0" stroke-width="1.2"/><path d="M12.6 4 L14.5 1 L16.4 4Z" fill="#2a6db0"/><g fill="#2a6db0"><rect x="13" y="11" width="1" height="1"/><rect x="15" y="11" width="1" height="1"/><rect x="14" y="12" width="1" height="1"/><rect x="13" y="13" width="1" height="1"/><rect x="15" y="13" width="1" height="1"/><rect x="14" y="14" width="1" height="1"/></g></svg>
<div class="t" style="left:1041px;top:411.50px;font-size:13px;line-height:16px;color:#333">Поля и сортировки</div>
<svg style="left:1168px;top:408px" width="28" height="22"><path d="M19.2 4.8 L13 11.2" stroke="#6e2a18" stroke-width="2.8" stroke-linecap="round"/><path d="M19.2 4.8 L13 11.2" stroke="#8f7a10" stroke-width="1" stroke-linecap="round"/><path d="M12.4 12.2 Q10 11.6 8.6 13.6 Q7.6 15.6 5.2 17.2 Q9.5 17.8 11.4 15.2 Q12.3 13.8 12.4 12.2Z" fill="#203c9c"/><path d="M9.5 13.8 L8 16" stroke="#3a8ab0" stroke-width="0.8"/></svg>
<div class="t" style="left:1195px;top:411.50px;font-size:13px;line-height:16px;color:#333">Оформление</div>
<svg style="left:1286px;top:408px" width="28" height="22"><g fill="none" stroke="#9a9a9a" stroke-width="1.1"><path d="M7.5 4 V15.4 Q7.5 16.4 8.5 16.4 H10 M7.5 7 H10"/><path d="M11.5 7.8 V12.8 Q11.5 13.5 12.3 13.5 H14 M11.5 10.3 H14"/></g><g fill="#1f5f9e"><rect x="6" y="3" width="5" height="1.9" rx="0.4"/><rect x="10" y="6.1" width="5" height="1.7" rx="0.4"/><rect x="10" y="15" width="5" height="1.9" rx="0.4"/></g><g fill="#2f86d8"><rect x="14" y="9" width="5" height="1.8" rx="0.4"/><rect x="14" y="12.2" width="5" height="1.7" rx="0.4"/></g></svg>
<div class="t" style="left:1314px;top:411.50px;font-size:13px;line-height:16px;color:#333">Структура</div>
<div class="btn" style="left:926px;top:442px;width:145px;height:26px;"></div>
<svg style="left:933px;top:447px" width="16" height="16"><circle cx="7.5" cy="7.5" r="7.3" fill="#27a24a"/><path d="M7.5 3.3 V11.7 M3.3 7.5 H11.7" stroke="#fff" stroke-width="2.4"/></svg>
<div class="t" style="left:956px;top:447.50px;font-size:13px;line-height:16px;color:#333">Добавить фильтр</div>
<div class="btn" style="left:1080px;top:442px;width:30px;height:26px;border-color:#d0d0d0;box-shadow:0 1px 1px rgba(0,0,0,.08)"></div>
<svg style="left:1088px;top:448px" width="15" height="15"><circle cx="7" cy="7" r="7" fill="#b8a5a0"/><path d="M4.2 4.2 L9.8 9.8 M9.8 4.2 L4.2 9.8" stroke="#fff" stroke-width="1.6"/></svg>
<div class="btn" style="left:1130px;top:442px;width:60px;height:26px;border-color:#d0d0d0;box-shadow:0 1px 1px rgba(0,0,0,.08)"><div class="dv" style="left:29px"></div></div>
<svg style="left:1137px;top:449px" width="15" height="12"><path d="M7.5 0 L14.5 7 H10.5 V11.5 H4.5 V7 H0.5 Z" fill="#b3b3b3"/></svg>
<svg style="left:1166px;top:449px" width="15" height="12"><path d="M7.5 12 L14.5 5 H10.5 V0.5 H4.5 V5 H0.5 Z" fill="#b3b3b3"/></svg>
<div class="btn" style="left:1210px;top:442px;width:60px;height:26px;"><div class="dv" style="left:29px"></div></div>
<svg style="left:1218px;top:447px" width="16" height="16"><g fill="#fff" stroke="#4d6f86" stroke-width="1"><rect x="4.6" y="0.6" width="10" height="10" rx="1.6"/><rect x="2.6" y="2.6" width="10" height="10" rx="1.6"/><rect x="0.6" y="4.6" width="10" height="10" rx="1.6"/></g><path d="M2.8 9.2 L5.4 12 L10.2 6.4" fill="none" stroke="#1d7a2a" stroke-width="2.6"/><path d="M2.8 9.2 L5.4 12 L10.2 6.4" fill="none" stroke="#33ee33" stroke-width="1.5"/></svg>
<svg style="left:1247px;top:447px" width="16" height="16"><g fill="#fff" stroke="#4d6f86" stroke-width="1"><rect x="4.6" y="0.6" width="10" height="10" rx="1.6"/><rect x="2.6" y="2.6" width="10" height="10" rx="1.6"/><rect x="0.6" y="4.6" width="10" height="10" rx="1.6"/></g></svg>
<div class="btn" style="left:1290px;top:442px;width:103px;height:26px;"></div>
<div class="t" style="left:1304px;top:447.50px;font-size:13px;line-height:16px;color:#333">Показывать</div>
<svg style="left:1380px;top:454px" width="7" height="4"><path d="M0 0.5 H6.5 L3.25 3.8Z" fill="#444"/></svg>
<div class="btn" style="left:1723px;top:442px;width:61px;height:26px;"></div>
<div class="t" style="left:1736px;top:447.50px;font-size:13px;line-height:16px;color:#333">Еще</div>
<svg style="left:1769px;top:454px" width="7" height="4"><path d="M0 0.5 H6.5 L3.25 3.8Z" fill="#444"/></svg>
<div class="a" style="left:926px;top:477px;width:858px;height:268px;background:#fff;border:1px solid #a4a4a4"></div>
<div class="a" style="left:927px;top:478px;width:842px;height:30px;background:#f2f2f2;"></div>
<div class="a" style="left:927px;top:508px;width:842px;height:1px;background:#cfcfd6;"></div>
<div class="a" style="left:1348px;top:478px;width:1px;height:30px;background:#d6d6d6;"></div>
<div class="a" style="left:1349px;top:478px;width:1px;height:30px;background:#fbfbfb;"></div>
<div class="a" style="left:1476px;top:478px;width:1px;height:30px;background:#d6d6d6;"></div>
<div class="a" style="left:1477px;top:478px;width:1px;height:30px;background:#fbfbfb;"></div>
<div class="a" style="left:1604px;top:478px;width:1px;height:30px;background:#d6d6d6;"></div>
<div class="a" style="left:1605px;top:478px;width:1px;height:30px;background:#fbfbfb;"></div>
<div class="a" style="left:1641px;top:478px;width:1px;height:30px;background:#d6d6d6;"></div>
<div class="a" style="left:1642px;top:478px;width:1px;height:30px;background:#fbfbfb;"></div>
<div class="t" style="left:935px;top:484.50px;font-size:13px;line-height:16px;color:#333">Поле</div>
<div class="t" style="left:1357px;top:484.50px;font-size:13px;line-height:16px;color:#333">Условие</div>
<div class="t" style="left:1485px;top:484.50px;font-size:13px;line-height:16px;color:#333">Значение</div>
<svg style="left:1614px;top:485px" width="13" height="13"><path d="M6.5 0.3 L8.2 4.6 L12.8 4.8 L9.2 7.7 L10.5 12.2 L6.5 9.6 L2.5 12.2 L3.8 7.7 L0.2 4.8 L4.8 4.6 Z" fill="#f3a73b"/></svg>
<div class="t" style="left:1650px;top:484.50px;font-size:13px;line-height:16px;color:#333">Заголовок</div>
<div class="a" style="left:927px;top:509px;width:842px;height:29px;background:#fdf0c5;"></div>
<div class="a" style="left:976px;top:509px;width:76px;height:26px;background:#fde18c;border:2px solid #f5d000;border-bottom:none"></div>
<div class="a" style="left:979px;top:512px;width:70px;height:23px;background:transparent;border:1px dotted #f0d060;border-bottom:none"></div>
<svg style="left:937px;top:517px" width="11" height="11"><circle cx="5.3" cy="5.3" r="4.4" fill="none" stroke="#a99a9a" stroke-width="1"/><path d="M2.8 5.3 H7.8" stroke="#555" stroke-width="1.2"/></svg>
<svg style="left:954px;top:515px" width="16" height="16"><g fill="#fff" stroke="#5a5a5a" stroke-width="0.9"><rect x="0.5" y="4" width="4.6" height="11.5" rx="1"/><rect x="5.3" y="4" width="4.6" height="11.5" rx="1"/><rect x="10.1" y="4" width="4.6" height="11.5" rx="1"/></g><g stroke="#8cb8d8" stroke-width="0.8" stroke-dasharray="1 1"><path d="M2.8 6 V14 M7.6 6 V14 M12.4 6 V14"/></g><path d="M2 2.2 H13" stroke="#222" stroke-width="1.1"/><path d="M0.5 2.2 L3.2 0.3 V4.1Z M14.5 2.2 L11.8 0.3 V4.1Z" fill="#222"/></svg>
<div class="t" style="left:980px;top:515.50px;font-size:13px;line-height:16px;color:#333">Параметры</div>
<div class="cb" style="left:974px;top:545px;border-color:#8f8f8f"></div>
<svg style="left:975px;top:544px" width="16" height="16"><path d="M2.4 7.2 L6.2 11.3 L13.6 1.6" fill="none" stroke="#1b8c46" stroke-width="2.6" stroke-linecap="round"/></svg>
<div class="t" style="left:1000px;top:544.50px;font-size:13px;line-height:16px;color:#333">Период</div>
<div class="t" style="left:1485px;top:544.50px;font-size:13px;line-height:16px;color:#333">01.01.2023 - 07....</div>
<svg style="left:1614px;top:545px" width="13" height="13"><path d="M6.5 0.3 L8.2 4.6 L12.8 4.8 L9.2 7.7 L10.5 12.2 L6.5 9.6 L2.5 12.2 L3.8 7.7 L0.2 4.8 L4.8 4.6 Z" fill="#f3a73b"/></svg>
<div class="t" style="left:1650px;top:544.50px;font-size:13px;line-height:16px;color:#b9b9b9">Период</div>
<div class="t" style="left:975px;top:573.50px;font-size:13px;line-height:16px;color:#333">Количество товаров</div>
<div class="t" style="left:1489px;top:573.50px;font-size:13px;line-height:16px;color:#333">В единицах хра...</div>
<svg style="left:1616px;top:577px" width="11" height="5"><rect x="0.5" y="1.3" width="9.3" height="3.3" fill="#8ed0f6" stroke="#9aa8b0" stroke-width="0.7" stroke-dasharray="1 0.8"/></svg>
<div class="t" style="left:1650px;top:573.50px;font-size:13px;line-height:16px;color:#b9b9b9">Количество тов...</div>
<div class="t" style="left:975px;top:602.50px;font-size:13px;line-height:16px;color:#333">Количественные итоги</div>
<div class="t" style="left:1485px;top:602.50px;font-size:13px;line-height:16px;color:#333">С учетом едини...</div>
<svg style="left:1615px;top:604px" width="12" height="12"><path d="M1.2 1.2 L10.2 10.2 M10.2 1.2 L1.2 10.2" stroke="#6f6f6f" stroke-width="2.6" stroke-linecap="round"/><path d="M1.4 1.4 L10 10 M10 1.4 L1.4 10" stroke="#d8d8d8" stroke-width="0.8"/></svg>
<div class="t" style="left:1650px;top:602.50px;font-size:13px;line-height:16px;color:#b9b9b9">Количественны...</div>
<svg style="left:937px;top:633px" width="11" height="11"><circle cx="5.3" cy="5.3" r="4.4" fill="none" stroke="#a99a9a" stroke-width="1"/><path d="M2.8 5.3 H7.8" stroke="#555" stroke-width="1.2"/></svg>
<svg style="left:954px;top:631px" width="16" height="16"><g fill="#fff" stroke="#7a7a7a" stroke-width="0.9"><rect x="0.5" y="3" width="4.6" height="12.5" rx="0.5"/><rect x="5.3" y="3" width="4.6" height="12.5" rx="0.5"/><rect x="10.1" y="3" width="4.6" height="12.5" rx="0.5"/></g><g stroke="#8cb8d8" stroke-width="0.8" stroke-dasharray="1 1"><path d="M2.8 5 V14 M12.4 5 V14"/></g><path d="M4.5 0.5 H15.5 L11.5 5.5 V11 H8.5 V5.5 Z" fill="#c9c9ce" stroke="#8b8b90" stroke-width="0.8"/></svg>
<div class="t" style="left:980px;top:631.50px;font-size:13px;line-height:16px;color:#333">Отборы</div>
<div class="cb" style="left:974px;top:661px;border-color:#8f8f8f"></div>
<svg style="left:975px;top:660px" width="16" height="16"><path d="M2.4 7.2 L6.2 11.3 L13.6 1.6" fill="none" stroke="#1b8c46" stroke-width="2.6" stroke-linecap="round"/></svg>
<div class="t" style="left:1000px;top:660.50px;font-size:13px;line-height:16px;color:#333">Склад</div>
<div class="t" style="left:1357px;top:660.50px;font-size:13px;line-height:16px;color:#333">Равно</div>
<div class="t" style="left:1485px;top:660.50px;font-size:13px;line-height:16px;color:#333">Новый склад</div>
<svg style="left:1614px;top:661px" width="13" height="13"><path d="M6.5 0.3 L8.2 4.6 L12.8 4.8 L9.2 7.7 L10.5 12.2 L6.5 9.6 L2.5 12.2 L3.8 7.7 L0.2 4.8 L4.8 4.6 Z" fill="#f3a73b"/></svg>
<div class="t" style="left:1650px;top:660.50px;font-size:13px;line-height:16px;color:#b9b9b9">Склад</div>
<div class="cb" style="left:974px;top:690px;border-color:#8f8f8f"></div>
<div class="t" style="left:1000px;top:689.50px;font-size:13px;line-height:16px;color:#333">Сегмент номенклатуры</div>
<div class="t" style="left:1357px;top:689.50px;font-size:13px;line-height:16px;color:#333">Равно</div>
<svg style="left:1616px;top:693px" width="11" height="5"><rect x="0.5" y="1.3" width="9.3" height="3.3" fill="#8ed0f6" stroke="#9aa8b0" stroke-width="0.7" stroke-dasharray="1 0.8"/></svg>
<div class="t" style="left:1650px;top:689.50px;font-size:13px;line-height:16px;color:#b9b9b9">Сегмент номенк...</div>
<div class="cb" style="left:974px;top:719px;border-color:#8f8f8f"></div>
<svg style="left:975px;top:718px" width="16" height="16"><path d="M2.4 7.2 L6.2 11.3 L13.6 1.6" fill="none" stroke="#1b8c46" stroke-width="2.6" stroke-linecap="round"/></svg>
<div class="t" style="left:1000px;top:718.50px;font-size:13px;line-height:16px;color:#333">Номенклатура</div>
<div class="t" style="left:1357px;top:718.50px;font-size:13px;line-height:16px;color:#333">Равно</div>
<div class="t" style="left:1485px;top:718.50px;font-size:13px;line-height:16px;color:#333">Одеялко</div>
<svg style="left:1616px;top:722px" width="11" height="5"><rect x="0.5" y="1.3" width="9.3" height="3.3" fill="#8ed0f6" stroke="#9aa8b0" stroke-width="0.7" stroke-dasharray="1 0.8"/></svg>
<div class="t" style="left:1650px;top:718.50px;font-size:13px;line-height:16px;color:#b9b9b9">Номенклатура</div>
<div class="a" style="left:960px;top:535px;width:636px;height:32px;border:3px solid #00f800;border-radius:7px;box-shadow:1px 1px 2px rgba(0,0,0,.25)"></div>
<div class="a" style="left:965px;top:650px;width:636px;height:34px;border:3px solid #00f800;border-radius:7px;box-shadow:1px 1px 2px rgba(0,0,0,.25)"></div>
<div class="a" style="left:958px;top:710px;width:648px;height:31px;border:3px solid #00f800;border-radius:7px;box-shadow:1px 1px 2px rgba(0,0,0,.25)"></div>
<svg style="left:1772px;top:486px" width="8" height="5"><path d="M0.5 4.5 H7.5 L4 0.5Z" fill="#c4c4c4"/></svg>
<div class="a" style="left:1772px;top:501px;width:8px;height:195px;background:#9a9a9a;border-radius:4px 4px 0 0"></div>
<div class="a" style="left:1772px;top:696px;width:8px;height:24px;background:#d2d2d2;border-radius:0 0 4px 4px"></div>
<svg style="left:1772px;top:729px" width="8" height="5"><path d="M0.5 0.5 H7.5 L4 4.5Z" fill="#333"/></svg>
<div class="t" style="left:915px;top:769.50px;font-size:13px;line-height:16px;color:#333">Вид:</div>
<div class="a" style="left:948px;top:765px;width:177px;height:25px;border:1px solid #aaa;border-radius:3px;background:#fff;overflow:hidden"><div class="a" style="left:0;top:0;width:68px;height:23px;background:linear-gradient(#f6f6f6,#e4e4e4)"></div><div class="a" style="left:68px;top:0;width:1px;height:23px;background:#a9a9a9"></div></div>
<div class="t" style="left:958px;top:769.50px;font-size:13px;line-height:16px;color:#333">Простой</div>
<div class="t" style="left:1028px;top:769.50px;font-size:13px;line-height:16px;color:#1f9a44">Расширенный</div>
<div class="t" style="left:1131px;top:769.50px;font-size:13px;line-height:16px;color:#2f6fb5">?</div>
<div class="ybtn" style="left:1527px;top:764px;width:198px;height:26px"></div>
<div class="t" style="left:1541px;top:769.50px;font-size:13px;line-height:16px;font-weight:bold;color:#3d3d3d;letter-spacing:0">Закрыть и сформировать</div>
<div class="btn" style="left:1734px;top:764px;width:61px;height:26px;"></div>
<div class="t" style="left:1747px;top:769.50px;font-size:13px;line-height:16px;color:#333">Еще</div>
<svg style="left:1781px;top:776px" width="7" height="4"><path d="M0 0.5 H6.5 L3.25 3.8Z" fill="#444"/></svg>
<!-- ENDDIALOG -->
</body></html>
